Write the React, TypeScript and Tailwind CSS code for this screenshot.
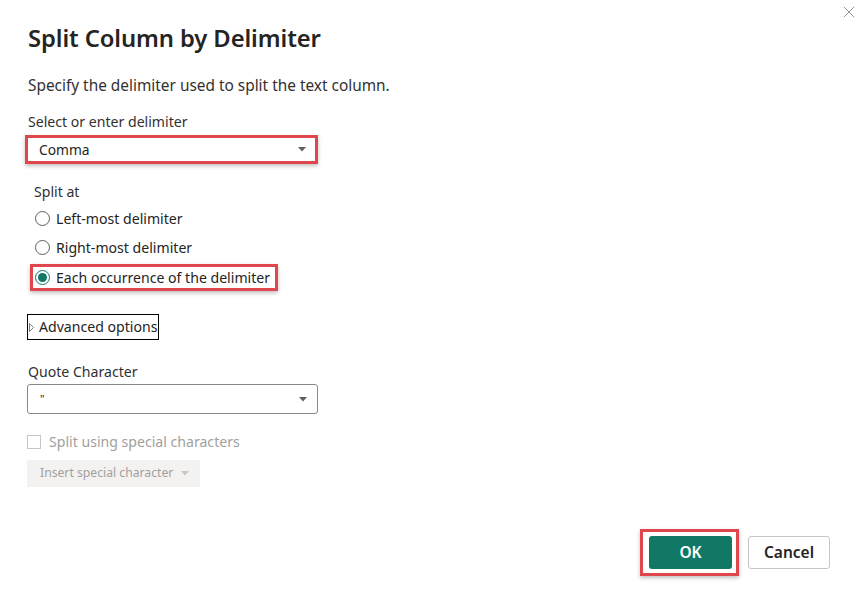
import { X } from 'lucide-react';

function Caret({ color = '#605e5c' }: { color?: string }) {
  return (
    <svg width="8" height="5" viewBox="0 0 8 5" className="shrink-0">
      <path d="M0 0 L8 0 L4 4.5 Z" fill={color} />
    </svg>
  );
}

function Radio({ checked }: { checked?: boolean }) {
  return (
    <span
      className={`flex h-[15px] w-[15px] shrink-0 items-center justify-center rounded-full border ${
        checked ? 'border-[#117865]' : 'border-[#605e5c]'
      } bg-white`}
    >
      {checked && <span className="h-[9px] w-[9px] rounded-full bg-[#117865]" />}
    </span>
  );
}

export default function App() {
  const font = { fontFamily: '"Noto Sans", "Open Sans", sans-serif' };

  return (
    <div
      className="relative flex h-[595px] w-[862px] flex-col whitespace-nowrap bg-white pl-[28px] text-[14.1px] text-[#252423]"
      style={font}
    >
      {/* close */}
      <button type="button" className="absolute right-[3px] top-[2px] text-[#8a8886]">
        <X size={20} strokeWidth={1.1} />
      </button>

      <h1 className="mt-[22px] h-[32px] text-[23.8px] font-semibold leading-[32px] tracking-[-0.1px]">
        Split Column by Delimiter
      </h1>

      <p className="mt-[22px] h-[20px] text-[15.4px] leading-[20px] text-[#323130]">
        Specify the delimiter used to split the text column.
      </p>

      <div className="mt-[16px] h-[20px] leading-[20px] text-[#323130]">Select or enter delimiter</div>

      {/* delimiter dropdown */}
      <div className="-ml-[3px] mt-[3px] flex h-[29px] w-[293px] items-center justify-between border-[3px] border-[#e0474c] bg-white pl-[11px] pr-[9px] shadow-[0_2px_4px_rgba(0,0,0,0.25)]">
        <span className="text-[13.8px] leading-[20px]">Comma</span>
        <Caret />
      </div>

      <div className="ml-[6px] mt-[18px] h-[20px] leading-[20px] text-[#323130]">Split at</div>

      {/* radios */}
      <div className="mt-[2px] flex flex-col">
        <label className="flex h-[29px] items-center gap-[6px] pl-[7px]">
          <Radio />
          <span>Left-most delimiter</span>
        </label>
        <label className="flex h-[29px] items-center gap-[6px] pl-[7px]">
          <Radio />
          <span>Right-most delimiter</span>
        </label>
        <label className="ml-[2px] mt-[2px] flex h-[27px] w-[248px] items-center gap-[6px] border-[3px] border-[#e0474c] pl-[2px] shadow-[0_2px_4px_rgba(0,0,0,0.25)]">
          <Radio checked />
          <span>Each occurrence of the delimiter</span>
        </label>
      </div>

      {/* advanced options */}
      <button
        type="button"
        className="-ml-[1px] mt-[23px] flex h-[26px] w-[132px] items-center gap-[5px] border border-black pl-[1px] text-left"
      >
        <svg width="5" height="9" viewBox="0 0 5 9" className="shrink-0">
          <path d="M0.5 0.5 L4.5 4.5 L0.5 8.5 Z" fill="none" stroke="#605e5c" strokeWidth="0.8" />
        </svg>
        <span className="leading-[20px]">Advanced options</span>
      </button>

      <div className="mt-[22px] h-[20px] leading-[20px] text-[#323130]">Quote Character</div>

      <div className="-ml-[1px] mt-[2px] flex h-[30px] w-[291px] items-center justify-between rounded-[3px] border border-[#8a8886] bg-white pl-[12px] pr-[10px]">
        <span className="text-[11px] leading-[20px]">"</span>
        <Caret />
      </div>

      {/* special characters */}
      <label className="-ml-[1px] mt-[18px] flex h-[20px] items-center gap-[8px] text-[#a19f9d]">
        <span className="h-[14px] w-[14px] shrink-0 border border-[#c8c6c4] bg-white" />
        <span>Split using special characters</span>
      </label>

      <button
        type="button"
        className="-ml-[1px] mt-[8px] flex h-[27px] w-[173px] items-center gap-[8px] bg-[#f3f2f1] pl-[13px] text-[12.2px] text-[#a19f9d]"
      >
        <span>Insert special character</span>
        <Caret color="#c8c6c4" />
      </button>

      {/* footer */}
      <div className="mt-[42px] flex items-center justify-end gap-[9px] pr-[32px]">
        <div className="border-[3px] border-[#e0474c] p-[4px_4px_4px_6px] shadow-[0_2px_4px_rgba(0,0,0,0.25)]">
          <button
            type="button"
            className="h-[33px] w-[83px] rounded-[3px] bg-[#117865] text-[15.5px] font-semibold text-white"
          >
            OK
          </button>
        </div>
        <button
          type="button"
          className="h-[33px] w-[82px] rounded-[3px] border border-[#c8c6c4] bg-white text-[15.5px] font-semibold text-[#252423]"
        >
          Cancel
        </button>
      </div>
    </div>
  );
}
